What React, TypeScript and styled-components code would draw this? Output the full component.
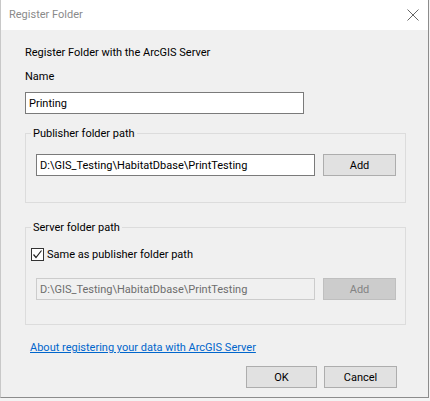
import styled, { createGlobalStyle } from 'styled-components'

const GlobalStyle = createGlobalStyle`
  html, body {
    margin: 0;
    padding: 0;
    background: #f3f3f3;
  }
  body {
    font-family: Roboto, "Liberation Sans", Arial, sans-serif;
    font-size: 11px;
    color: #000;
  }
`

const Page = styled.div`
  width: 430px;
  height: 401px;
  overflow: hidden;
  background: #f3f3f3;
`

const Window = styled.div`
  width: 429px;
  height: 398px;
  background: #f0f0f0;
  border-right: 1px solid #8c8c8c;
  border-bottom: 1px solid #8c8c8c;
  border-left: 1px solid #c8c8c8;
  box-sizing: border-box;
  display: flex;
  flex-direction: column;
`

const TitleBar = styled.div`
  height: 30px;
  flex-shrink: 0;
  background: #fff;
  display: flex;
  align-items: center;
  justify-content: space-between;
  padding: 0 9px 0 8px;
`

const Title = styled.span`
  color: #8a8a8a;
  line-height: 15px;
  margin-top: -1px;
`

const Body = styled.div`
  flex: 1;
  display: flex;
  flex-direction: column;
  padding: 15px 22px 8px 24px;
`

const Text = styled.div<{ $top?: number }>`
  line-height: 15px;
  margin-top: ${(p) => p.$top ?? 0}px;
`

const TextBox = styled.input<{ $width: number }>`
  box-sizing: border-box;
  width: ${(p) => p.$width}px;
  height: 22px;
  margin: 0;
  padding: 0 3px;
  border: 1px solid #7a7a7a;
  background: #fff;
  font: inherit;
  color: #000;
  outline: none;

  &:disabled {
    border-color: #cccccc;
    background: #f0f0f0;
    color: #6d6d6d;
  }
`

const Group = styled.fieldset<{ $top: number; $bottom: number }>`
  margin: ${(p) => p.$top}px 0 0;
  width: 381px;
  box-sizing: border-box;
  border: 1px solid #dcdcdc;
  padding: 0 0 ${(p) => p.$bottom}px 10px;
  min-width: 0;
`

const Legend = styled.legend`
  padding: 0 2px;
  margin-left: -5px;
  line-height: 15px;
`

const Row = styled.div<{ $top: number }>`
  display: flex;
  align-items: center;
  gap: 8px;
  margin-top: ${(p) => p.$top}px;
`

const Button = styled.button<{ $width: number }>`
  box-sizing: border-box;
  width: ${(p) => p.$width}px;
  height: 22px;
  margin: 0;
  padding: 0;
  border: 1px solid #adadad;
  background: #e1e1e1;
  font: inherit;
  color: #000;

  &:disabled {
    background: #cccccc;
    border-color: #bfbfbf;
    color: #838383;
  }
`

const CheckRow = styled.label`
  display: flex;
  align-items: center;
  gap: 3px;
  margin: 12px 0 0 -5px;
  line-height: 15px;
`

const CheckBox = styled.span`
  width: 13px;
  height: 13px;
  box-sizing: border-box;
  border: 1px solid #333;
  background: #fff;
  display: flex;
  align-items: center;
  justify-content: center;
`

const Link = styled.a`
  align-self: flex-start;
  margin: 15px 0 0 5px;
  line-height: 15px;
  color: #0066cc;
  text-decoration: underline;
`

const Footer = styled.div`
  display: flex;
  justify-content: flex-end;
  gap: 7px;
  margin-top: 11px;
  padding-right: 9px;
`

export default function App() {
  const path = 'D:\\GIS_Testing\\HabitatDbase\\PrintTesting'
  return (
    <Page>
      <GlobalStyle />
      <Window>
        <TitleBar>
          <Title>Register Folder</Title>
          <svg width="12" height="12" viewBox="0 0 12 12">
            <path d="M0.5 0.5 L11.5 11.5 M11.5 0.5 L0.5 11.5" stroke="#666" strokeWidth="1" />
          </svg>
        </TitleBar>
        <Body>
          <Text>Register Folder with the ArcGIS Server</Text>
          <Text $top={9}>Name</Text>
          <Text $top={8}>
            <TextBox $width={279} defaultValue="Printing" />
          </Text>
          <Group $top={12} $bottom={26}>
            <Legend>Publisher folder path</Legend>
            <Row $top={13}>
              <TextBox $width={279} defaultValue={path} />
              <Button $width={73}>Add</Button>
            </Row>
          </Group>
          <Group $top={17} $bottom={24}>
            <Legend>Server folder path</Legend>
            <CheckRow>
              <CheckBox>
                <svg width="11" height="11" viewBox="0 0 11 11">
                  <path d="M1.5 5.5 L4 8.5 L9.5 1.5" stroke="#222" strokeWidth="1.2" fill="none" />
                </svg>
              </CheckBox>
              Same as publisher folder path
            </CheckRow>
            <Row $top={16}>
              <TextBox $width={279} defaultValue={path} disabled />
              <Button $width={73} disabled>Add</Button>
            </Row>
          </Group>
          <Link href="#">About registering your data with ArcGIS Server</Link>
          <Footer>
            <Button $width={71}>OK</Button>
            <Button $width={73}>Cancel</Button>
          </Footer>
        </Body>
      </Window>
    </Page>
  )
}
